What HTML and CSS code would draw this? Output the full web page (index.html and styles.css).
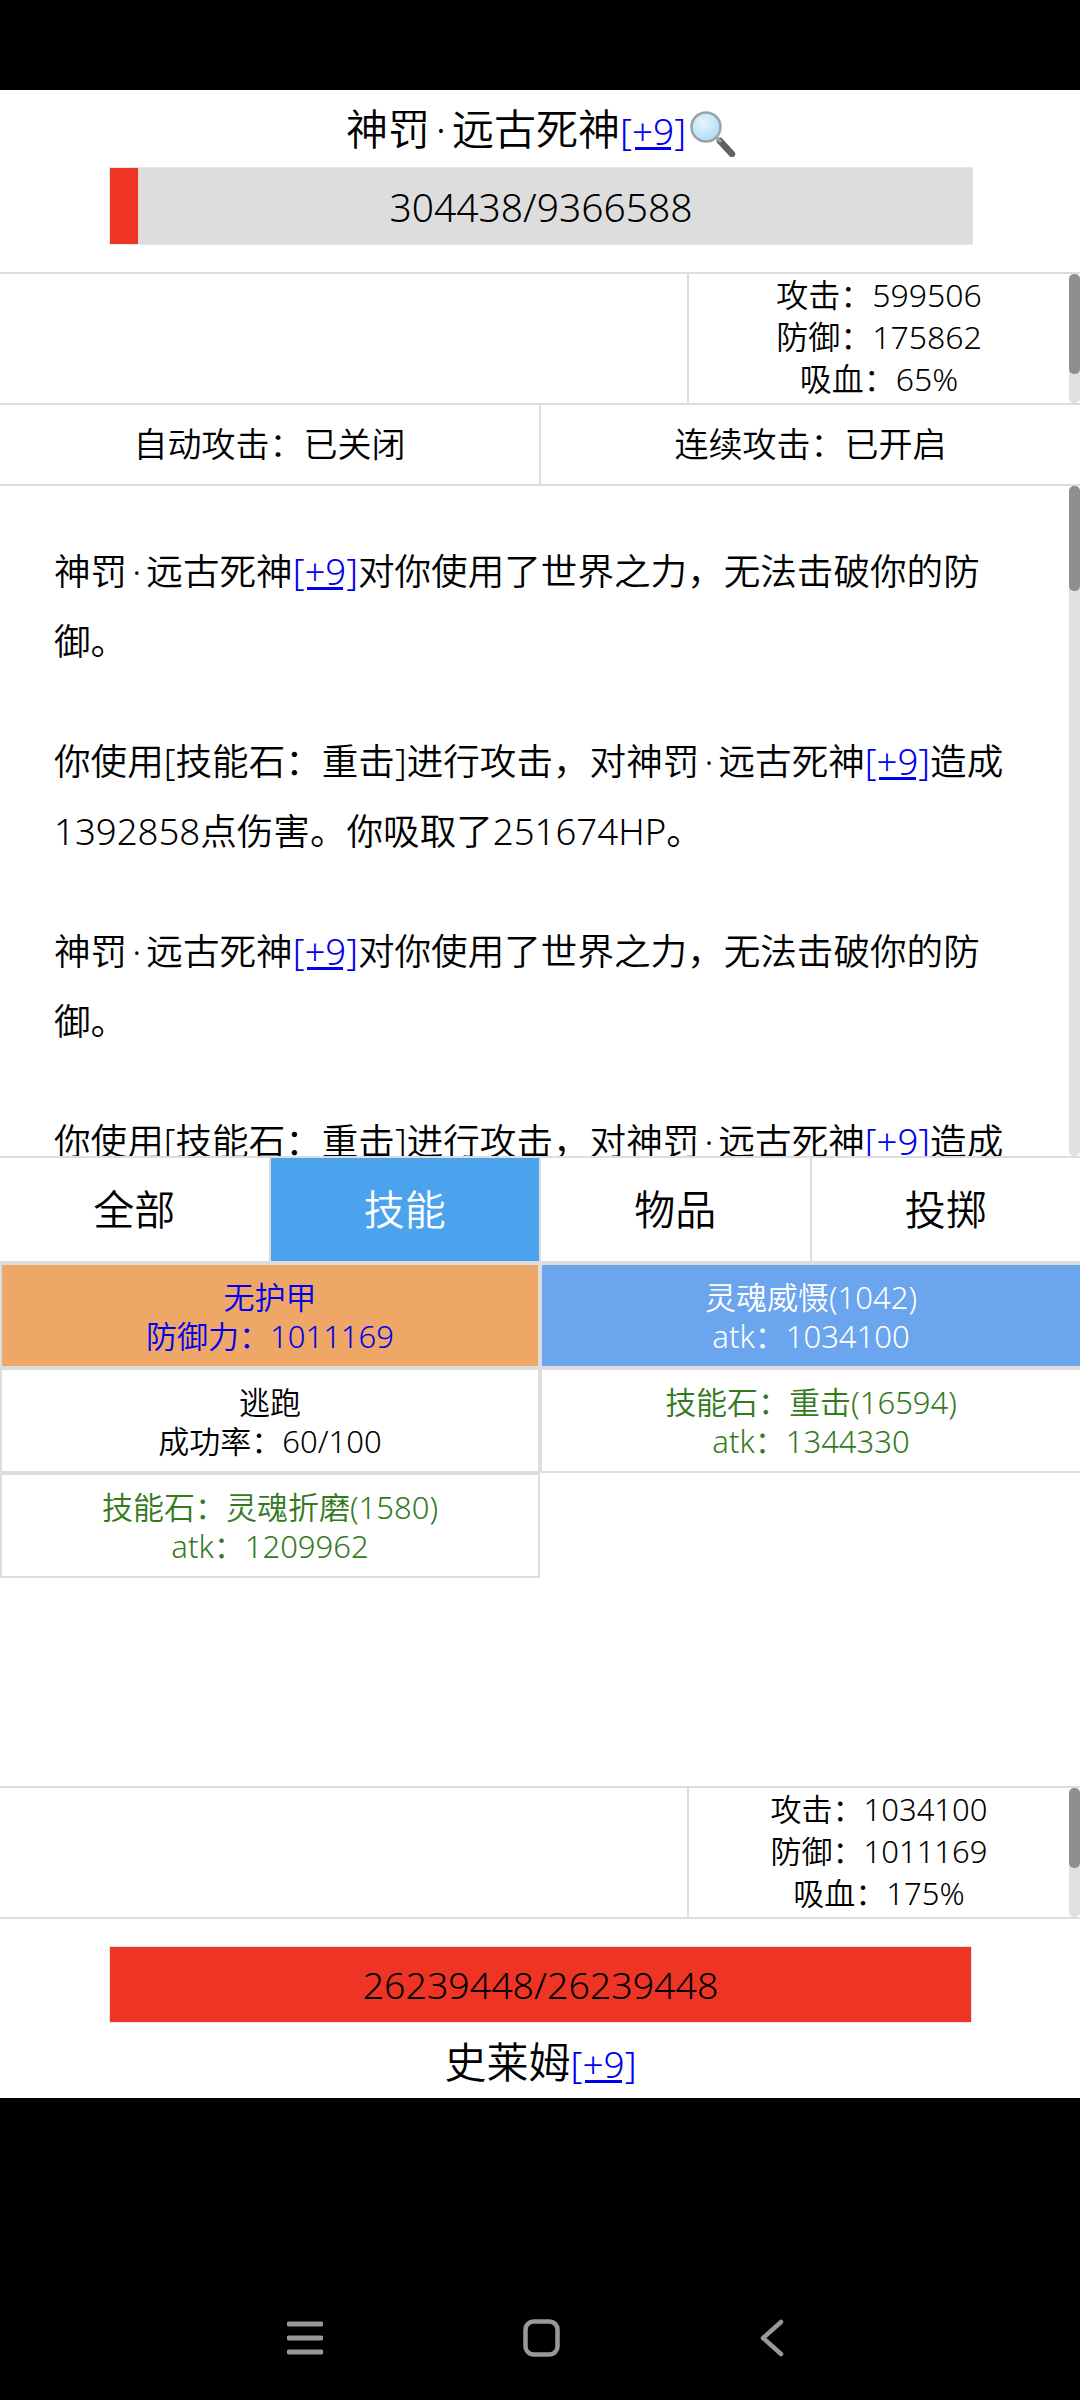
FILE: index.html
```html
<!DOCTYPE html>
<html>
  <head>
    <title>Battle</title>
    <meta name="viewport" content="width=device-width, initial-scale=1.0" />
    <link rel="stylesheet" href="styles.css">
  </head>
  <body>
    <div class="status-bar"></div>
    <div class="game">
      <!-- Enemy -->
      <div class="enemy">
        <div class="name">神罚<span class="dot">·</span>远古死神<a href="#" class="plus">[+9]</a><svg class="lens" viewBox="0 0 46 46" xmlns="http://www.w3.org/2000/svg">
            <defs>
              <radialGradient id="glass" cx="0.4" cy="0.35" r="0.7">
                <stop offset="0" stop-color="#e4f4fd" />
                <stop offset="1" stop-color="#aedbf5" />
              </radialGradient>
            </defs>
            <path d="M30 30L42 43" stroke="#5f6164" stroke-width="6.5" stroke-linecap="round" />
            <path d="M26 26L31 31" stroke="#a0a4a8" stroke-width="3" />
            <circle cx="16" cy="16" r="14.5" fill="url(#glass)" stroke="#9ba3a8" stroke-width="2.5" />
          </svg></div>
        <div class="hp-bar hp-enemy"><div class="hp-fill" style="width: 3.3%"></div><span class="hp-text">304438/9366588</span></div>
      </div>

      <div class="stats-row">
        <div class="stats-left"></div>
        <div class="stats">
          <div>攻击：599506</div>
          <div>防御：175862</div>
          <div>吸血：65%</div>
        </div>
        <div class="scroll-track"><div class="scroll-thumb"></div></div>
      </div>

      <div class="toggles">
        <div class="toggle">自动攻击：已关闭</div>
        <div class="toggle">连续攻击：已开启</div>
      </div>

      <!-- Battle log -->
      <div class="log">
        <p>神罚<span class="dot">·</span>远古死神<a href="#" class="plus">[+9]</a>对你使用了世界之力，无法击破你的防御。</p>
        <p>你使用[技能石：重击]进行攻击，对神罚<span class="dot">·</span>远古死神<a href="#" class="plus">[+9]</a>造成1392858点伤害。你吸取了251674HP。</p>
        <p>神罚<span class="dot">·</span>远古死神<a href="#" class="plus">[+9]</a>对你使用了世界之力，无法击破你的防御。</p>
        <p>你使用[技能石：重击]进行攻击，对神罚<span class="dot">·</span>远古死神<a href="#" class="plus">[+9]</a>造成1392858点伤害。你吸取了251674HP。</p>
        <div class="log-track"><div class="log-thumb"></div></div>
      </div>

      <div class="tabs">
        <div class="tab">全部</div>
        <div class="tab tab-active">技能</div>
        <div class="tab">物品</div>
        <div class="tab">投掷</div>
      </div>

      <!-- Skills -->
      <div class="skills">
        <div class="skill skill-armor"><div>无护甲</div><div>防御力：1011169</div></div>
        <div class="skill skill-selected"><div>灵魂威慑(1042)</div><div>atk：1034100</div></div>
        <div class="skill"><div>逃跑</div><div>成功率：60/100</div></div>
        <div class="skill skill-stone"><div>技能石：重击(16594)</div><div>atk：1344330</div></div>
        <div class="skill skill-stone"><div>技能石：灵魂折磨(1580)</div><div>atk：1209962</div></div>
      </div>

      <div class="stats-row stats-player">
        <div class="stats-left"></div>
        <div class="stats">
          <div>攻击：1034100</div>
          <div>防御：1011169</div>
          <div>吸血：175%</div>
        </div>
        <div class="scroll-track"><div class="scroll-thumb"></div></div>
      </div>

      <!-- Player -->
      <div class="player">
        <div class="hp-bar hp-player"><div class="hp-fill" style="width: 100%"></div><span class="hp-text">26239448/26239448</span></div>
        <div class="name">史莱姆<a href="#" class="plus">[+9]</a></div>
      </div>
    </div>

    <div class="nav-bar">
      <svg class="nav-icon nav-menu" viewBox="0 0 36 34" xmlns="http://www.w3.org/2000/svg">
        <path d="M2 3H34M2 17H34M2 31H34" stroke="#999" stroke-width="5" stroke-linecap="round" />
      </svg>
      <svg class="nav-icon nav-home" viewBox="0 0 37 38" xmlns="http://www.w3.org/2000/svg">
        <rect x="2.5" y="2.5" width="32" height="33" rx="8" fill="none" stroke="#999" stroke-width="4.5" />
      </svg>
      <svg class="nav-icon nav-back" viewBox="0 0 24 38" xmlns="http://www.w3.org/2000/svg">
        <path d="M21 3L3 19L21 35" fill="none" stroke="#999" stroke-width="4.5" stroke-linecap="round" stroke-linejoin="round" />
      </svg>
    </div>
  </body>
</html>
```

FILE: styles.css
```css
* {
  box-sizing: border-box;
}
body {
  margin: 0;
  width: 1080px;
  height: 2400px;
  overflow: hidden;
  background: #000;
  color: #000;
  font-family: "Noto Sans", "Noto Sans CJK SC", sans-serif;
  font-weight: 350;
  font-size: 32px;
}
.status-bar {
  height: 90px;
}
.game {
  height: 2008px;
  background: #fff;
  display: flex;
  flex-direction: column;
  overflow: hidden;
}
.plus {
  color: #0000ee;
  text-decoration: underline;
}
.dot {
  margin: 0 0.14em;
}
.enemy {
  height: 182px;
  padding: 9px 107px 0 109px;
}
.name {
  height: 60px;
  text-align: center;
  font-size: 42px;
  line-height: 60px;
  white-space: nowrap;
}
.name .plus {
  font-size: 37px;
}
.lens {
  width: 46px;
  height: 46px;
  margin-left: 4px;
  vertical-align: middle;
}
.hp-bar {
  position: relative;
  background: #ddd;
  border: 1px solid #e6e6e6;
}
.hp-enemy {
  height: 78px;
  margin-top: 8px;
}
.hp-player {
  height: 77px;
}
.hp-fill {
  height: 100%;
  background: #ee3424;
}
.hp-text {
  position: absolute;
  top: 0;
  left: 0;
  right: 0;
  text-align: center;
  font-size: 39px;
}
.hp-enemy .hp-text {
  line-height: 78px;
}
.hp-player .hp-text {
  font-size: 37.5px;
  line-height: 75px;
}
.stats-row {
  display: flex;
  flex: none;
  height: 133px;
  border-top: 2px solid #ddd;
  border-bottom: 2px solid #ddd;
}
.stats-left {
  width: 689px;
  border-right: 2px solid #ddd;
}
.stats {
  width: 380px;
  text-align: center;
  font-size: 32px;
  line-height: 42px;
}
.scroll-track {
  width: 11px;
  background: #e0e0e0;
  border-radius: 5px;
}
.scroll-thumb {
  height: 100px;
  background: #8f8f8f;
  border-radius: 5px;
}
.toggles {
  display: flex;
  flex: none;
  height: 81px;
  border-bottom: 2px solid #ddd;
}
.toggle {
  flex: 1;
  text-align: center;
  font-size: 34px;
  line-height: 78px;
}
.toggle + .toggle {
  border-left: 2px solid #ddd;
}
.log {
  position: relative;
  flex: none;
  height: 672px;
  overflow: hidden;
  padding: 50px 64px 0 54px;
  font-size: 36.6px;
  line-height: 70px;
  border-bottom: 2px solid #ddd;
}
.log p {
  margin: 0 0 50px;
}
.log-track {
  position: absolute;
  top: 0;
  right: 0;
  bottom: 0;
  width: 11px;
  background: #e0e0e0;
  border-radius: 5px;
}
.log-thumb {
  height: 105px;
  background: #8f8f8f;
  border-radius: 5px;
}
.tabs {
  display: flex;
  flex: none;
  height: 105px;
  border-bottom: 2px solid #ddd;
}
.tab {
  flex: 1;
  text-align: center;
  font-size: 41px;
  line-height: 103px;
}
.tab + .tab {
  border-left: 2px solid #ddd;
}
.tab-active {
  background: #4aa3ec;
  color: #fff;
  border-left: 0;
}
.skills {
  display: grid;
  flex: none;
  grid-template-columns: 540px 542px;
  grid-auto-rows: 105px;
  align-content: start;
  width: 1082px;
  height: 523px;
}
.skill {
  border: 2px solid #ddd;
  text-align: center;
  font-size: 31px;
  line-height: 39px;
  padding-top: 13px;
}
.skill-armor {
  background: #eea766;
  color: #0000ee;
}
.skill-selected {
  background: #6aa5ee;
  color: #fff;
}
.skill-stone {
  color: #337a1d;
}
.stats-player .stats {
  font-size: 31px;
}
.stats-player .scroll-thumb {
  height: 80px;
}
.player {
  flex: 1;
  padding: 27px 108px 0 109px;
}
.player .name {
  margin-top: 9px;
}
.nav-bar {
  display: flex;
  justify-content: center;
  align-items: center;
  gap: 200px;
  height: 302px;
  padding: 178px 9px 0 0;
}
.nav-menu {
  width: 36px;
  height: 34px;
}
.nav-home {
  width: 37px;
  height: 38px;
}
.nav-back {
  width: 24px;
  height: 38px;
}
```
